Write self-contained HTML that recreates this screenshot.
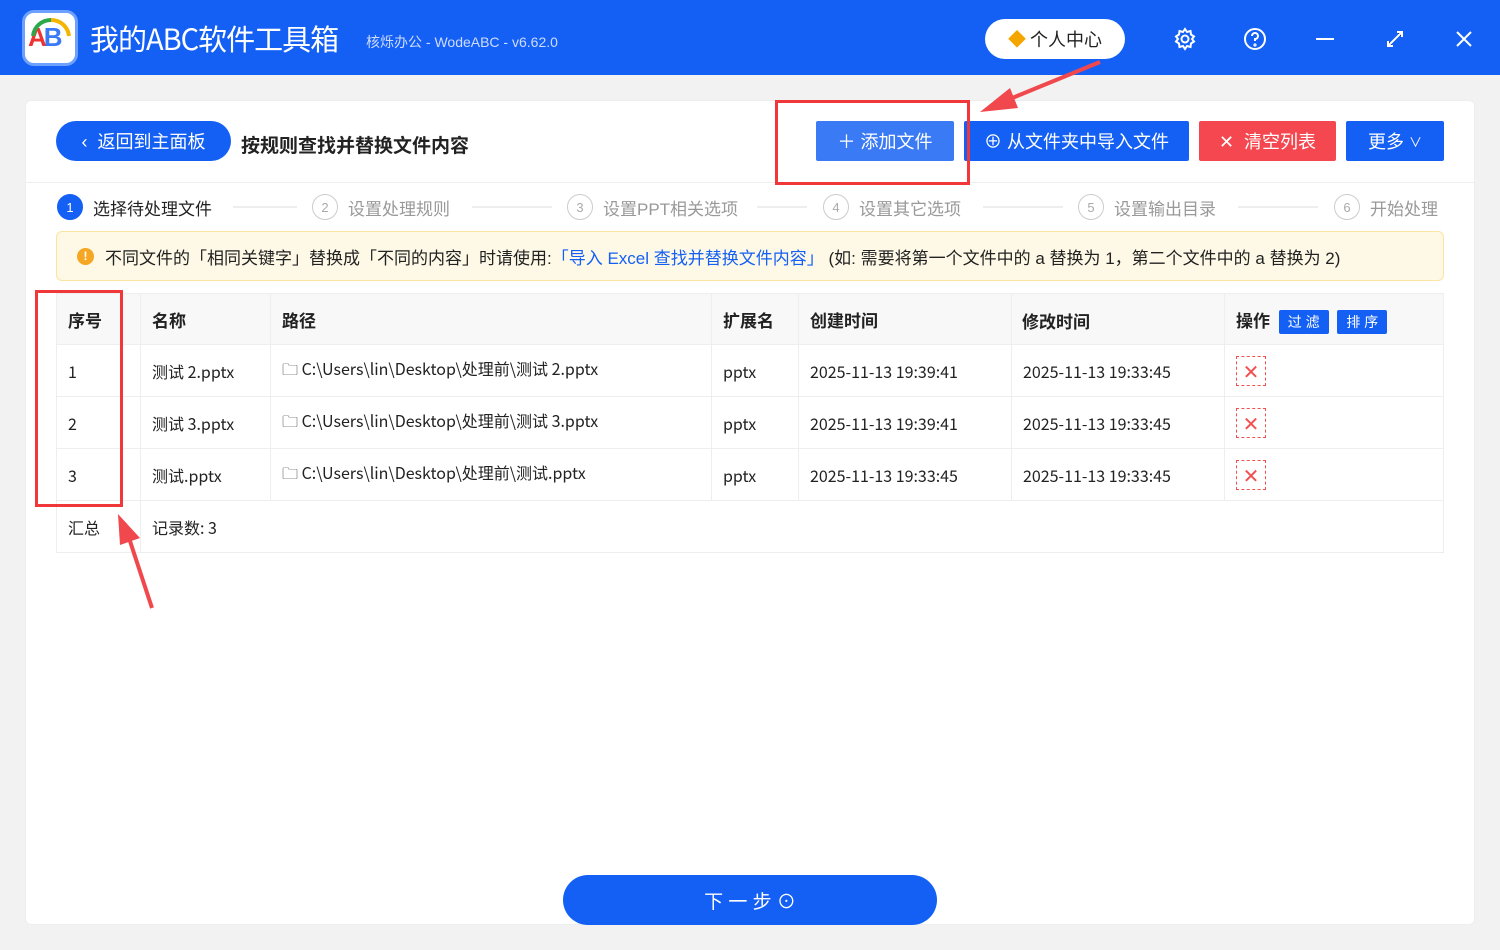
<!DOCTYPE html>
<html><head><meta charset="utf-8"><style>
*{box-sizing:border-box;margin:0;padding:0}
body{width:1500px;height:950px;background:#f2f2f2;font-family:"Liberation Sans","Noto Sans CJK SC",sans-serif;position:relative;overflow:hidden;color:#222}
.a{position:absolute}
.bar{left:0;top:0;width:1500px;height:75px;background:#1460f5}
.card{left:25px;top:100px;width:1450px;height:825px;background:#fff;border:1px solid #eee;border-radius:6px}
.btn{position:absolute;color:#fff;font-size:18px;display:flex;align-items:center;justify-content:center;border-radius:2px}
.step{position:absolute;top:194px;font-size:17px;color:#999;display:flex;align-items:center}
.c{width:26px;height:26px;border-radius:50%;border:1px solid #ccc;font-size:13px;display:flex;align-items:center;justify-content:center;margin-right:10px;color:#aaa}
.line{position:absolute;top:206px;height:2px;background:#eee}
table{position:absolute;left:56px;top:293px;border-collapse:collapse;font-size:17px;width:1388px}
td{border:1px solid #eee;padding-left:11px;height:52px;font-family:"Noto Sans CJK SC","Liberation Sans",sans-serif;font-size:16px}
th{border:1px solid #eee;background:#f8f8f8;text-align:left;padding-left:11px;height:51px;font-size:17px}
.x{width:30px;height:30px;border:1px dashed #f05050;display:flex;align-items:center;justify-content:center;color:#f05050;font-size:20px}
</style></head><body>
<div class="a bar"></div>
<div class="a" style="left:22px;top:10px;width:56px;height:56px;background:#fff;border-radius:12px;border:3px solid #6da0ff"></div>
<div class="a" style="left:28px;top:22px;font-size:26px;font-weight:bold;letter-spacing:-3px"><span style="color:#e33">A</span><span style="color:#3a7af5">B</span></div>
<svg class="a" style="left:28px;top:14px" width="46" height="24"><path d="M5 22 A18 18 0 0 1 23 6" stroke="#2aa84a" stroke-width="4" fill="none"/><path d="M23 6 A18 18 0 0 1 41 22" stroke="#f5b400" stroke-width="4" fill="none"/></svg>
<div class="a" style="left:90px;top:18px;color:#fff;font-size:29px;font-family:'Noto Sans CJK SC',sans-serif;letter-spacing:-1px;line-height:40px">我的ABC软件工具箱</div>
<div class="a" style="left:366px;top:32px;color:#cfdcff;font-size:14px">核烁办公 - WodeABC - v6.62.0</div>
<div class="a" style="left:985px;top:19px;width:140px;height:40px;background:#fff;border-radius:20px;display:flex;align-items:center;justify-content:center;font-size:18px"><span style="color:#f5a500;margin-right:4px">◆</span>个人中心</div>
<svg class="a" style="left:1173px;top:27px" width="24" height="24" fill="none" stroke="#fff" stroke-width="2"><circle cx="12" cy="12" r="3.5"/><path d="M12 2l2 3 3.5-1 .5 3.5 3 2-2 2.5 2 2.5-3 2-.5 3.5-3.5-1-2 3-2-3-3.5 1-.5-3.5-3-2 2-2.5-2-2.5 3-2 .5-3.5 3.5 1z"/></svg>
<svg class="a" style="left:1243px;top:27px" width="24" height="24" fill="none" stroke="#fff" stroke-width="2"><circle cx="12" cy="12" r="10"/><path d="M9 9a3 3 0 1 1 3 3v2"/><circle cx="12" cy="18" r=".6"/></svg>
<div class="a" style="left:1316px;top:38px;width:18px;height:2px;background:#fff"></div>
<svg class="a" style="left:1385px;top:29px" width="20" height="20" stroke="#fff" stroke-width="2"><path d="M3 17L17 3M12 3h5v5M3 12v5h5"/></svg>
<svg class="a" style="left:1455px;top:30px" width="18" height="18" stroke="#fff" stroke-width="2"><path d="M2 2L16 16M16 2L2 16"/></svg>
<div class="a card"></div>
<div class="a" style="left:25px;top:182px;width:1450px;height:1px;background:#eee"></div>
<div class="btn" style="left:56px;top:121px;width:175px;height:40px;background:#1460f5;border-radius:20px">‹&nbsp;&nbsp;返回到主面板</div>
<div class="a" style="left:241px;top:131px;font-size:19px;font-weight:bold">按规则查找并替换文件内容</div>
<div class="btn" style="left:816px;top:121px;width:138px;height:40px;background:#3a7af5">＋&nbsp;添加文件</div>
<div class="btn" style="left:964px;top:121px;width:225px;height:40px;background:#1460f5">⊕&nbsp;从文件夹中导入文件</div>
<div class="btn" style="left:1199px;top:121px;width:137px;height:40px;background:#f5474f">✕&nbsp;&nbsp;清空列表</div>
<div class="btn" style="left:1346px;top:121px;width:98px;height:40px;background:#1460f5">更多&nbsp;<span style="font-size:13px">∨</span></div>
<div class="step" style="left:57px;color:#222"><div class="c" style="background:#1460f5;border-color:#1460f5;color:#fff">1</div>选择待处理文件</div>
<div class="line" style="left:233px;width:64px"></div>
<div class="step" style="left:312px"><div class="c">2</div>设置处理规则</div>
<div class="line" style="left:472px;width:80px"></div>
<div class="step" style="left:567px"><div class="c">3</div>设置PPT相关选项</div>
<div class="line" style="left:757px;width:50px"></div>
<div class="step" style="left:823px"><div class="c">4</div>设置其它选项</div>
<div class="line" style="left:983px;width:80px"></div>
<div class="step" style="left:1078px"><div class="c">5</div>设置输出目录</div>
<div class="line" style="left:1238px;width:80px"></div>
<div class="step" style="left:1334px"><div class="c">6</div>开始处理</div>
<div class="a" style="left:56px;top:231px;width:1388px;height:50px;background:#fef9e6;border:1px solid #fbe3a0;border-radius:6px;font-size:17px;display:flex;align-items:center;padding-left:20px"><span style="display:inline-block;width:17px;height:17px;border-radius:50%;background:#f5a623;color:#fff;font-size:12px;text-align:center;line-height:17px;margin-right:11px;font-weight:bold">!</span>不同文件的「相同关键字」替换成「不同的内容」时请使用: <span style="color:#1460f5">「导入 Excel 查找并替换文件内容」</span>&nbsp;(如: 需要将第一个文件中的 a 替换为 1，第二个文件中的 a 替换为 2)</div>
<table>
<tr><th style="width:84px">序号</th><th style="width:130px">名称</th><th style="width:441px">路径</th><th style="width:87px">扩展名</th><th style="width:213px">创建时间</th><th style="width:213px">操作</th><th>操作 <span style="background:#1460f5;color:#fff;font-size:14px;padding:4px 9px;border-radius:2px;margin-left:4px;font-weight:normal">过 滤</span> <span style="background:#1460f5;color:#fff;font-size:14px;padding:4px 9px;border-radius:2px;margin-left:4px;font-weight:normal">排 序</span></th></tr>
<tr><td>1</td><td>测试 2.pptx</td><td>🗀 C:\Users\lin\Desktop\处理前\测试 2.pptx</td><td>pptx</td><td>2025-11-13 19:39:41</td><td>2025-11-13 19:33:45</td><td><div class="x">✕</div></td></tr>
<tr><td>2</td><td>测试 3.pptx</td><td>🗀 C:\Users\lin\Desktop\处理前\测试 3.pptx</td><td>pptx</td><td>2025-11-13 19:39:41</td><td>2025-11-13 19:33:45</td><td><div class="x">✕</div></td></tr>
<tr><td>3</td><td>测试.pptx</td><td>🗀 C:\Users\lin\Desktop\处理前\测试.pptx</td><td>pptx</td><td>2025-11-13 19:33:45</td><td>2025-11-13 19:33:45</td><td><div class="x">✕</div></td></tr>
<tr><td style="height:49px">汇总</td><td colspan="6" style="border-left:1px solid #eee">记录数: 3</td></tr>
</table>
<div class="a" style="left:1022px;top:294px;width:188px;height:49px;background:#f8f8f8;font-size:17px;font-weight:bold;padding:14px 0 0 0">修改时间</div>
<div class="btn" style="left:563px;top:875px;width:374px;height:50px;background:#1460f5;border-radius:25px;font-size:19px">下 一 步 ⊙</div>
<div class="a" style="left:775px;top:100px;width:195px;height:85px;border:3px solid #f0383a"></div>
<div class="a" style="left:35px;top:290px;width:88px;height:217px;border:3px solid #f0383a"></div>
<svg class="a" style="left:0;top:0" width="1500" height="950"><path d="M1100 62L1000 103" stroke="#f0484c" stroke-width="4"/><path d="M980 112L1010 88L1018 108Z" fill="#f0484c"/><path d="M152 608L128 535" stroke="#f0484c" stroke-width="4"/><path d="M118 514L140 538L120 545Z" fill="#f0484c"/></svg>
</body></html>
